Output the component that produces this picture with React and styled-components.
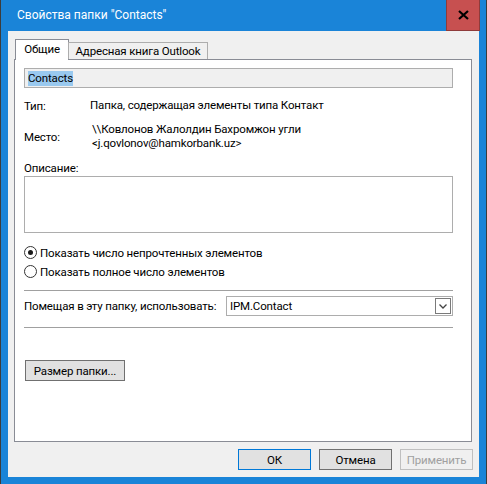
import React from "react";
import styled, { createGlobalStyle } from "styled-components";

const FONT = `Roboto, "Noto Sans", "Liberation Sans", sans-serif`;

const GlobalStyle = createGlobalStyle`
  html, body { margin: 0; padding: 0; background: #1a84d8; }
  * { box-sizing: border-box; }
  body {
    font-family: ${FONT};
    font-size: 11.5px;
    letter-spacing: -0.15px;
    color: #000;
  }
`;

const Window = styled.div`
  width: 487px;
  height: 484px;
  background: #1a84d8;
  border-left: 1px solid #3c3c3c;
  border-right: 1px solid #3c3c3c;
  display: flex;
  flex-direction: column;
  padding: 0 7px 7px 7px;
`;

const TitleBar = styled.div`
  height: 31px;
  display: flex;
  align-items: center;
  justify-content: space-between;
  margin-right: -8px;
`;

const Title = styled.span`
  color: #fff;
  font-size: 12px;
  letter-spacing: 0;
  padding-left: 9px;
  padding-bottom: 1px;
`;

const CloseButton = styled.div`
  width: 34px;
  height: 31px;
  margin-right: 7px;
  background: #c75050;
  border: 1px solid #8e3b3b;
  border-top: none;
  display: flex;
  align-items: center;
  justify-content: center;
`;

const Client = styled.div`
  flex: 1;
  background: #f0f0f0;
  padding: 8px 5px 0 6px;
  display: flex;
  flex-direction: column;
`;

const TabStrip = styled.div`
  display: flex;
  align-items: flex-end;
  height: 20px;
  padding-left: 1px;
  position: relative;
  z-index: 1;
`;

const Tab = styled.div`
  width: ${(p) => p.$w}px;
  height: ${(p) => (p.$active ? "21px" : "17px")};
  margin-bottom: ${(p) => (p.$active ? "-1px" : "0")};
  padding-bottom: ${(p) => (p.$active ? "2px" : "0")};
  background: ${(p) => (p.$active ? "#fff" : "#f0f0f0")};
  border: 1px solid ${(p) => (p.$active ? "#898c95" : "#adadad")};
  border-bottom: none;
  margin-left: ${(p) => (p.$active ? "0" : "-1px")};
  display: flex;
  align-items: center;
  justify-content: center;
  white-space: nowrap;
`;

const Panel = styled.div`
  width: 458px;
  height: 383px;
  background: #fff;
  border: 1px solid #898c95;
  padding: 8px 18px 0 9px;
  display: flex;
  flex-direction: column;
`;

const NameField = styled.div`
  height: 20px;
  background: #f0f0f0;
  border: 1px solid #adadad;
  display: flex;
  align-items: center;
  padding-left: 3px;
`;

const Selection = styled.span`
  background: #99c9ef;
  line-height: 15px;
`;

const InfoRow = styled.div`
  display: flex;
  align-items: center;
  margin-top: ${(p) => p.$mt || 0}px;
`;

const InfoLabel = styled.div`
  width: 66px;
  line-height: 16px;
`;

const InfoValue = styled.div`
  line-height: 13.5px;
  padding-left: ${(p) => p.$indent || 0}px;
`;

const FieldLabel = styled.div`
  line-height: 16px;
  margin-top: 10px;
`;

const TextBox = styled.div`
  height: 57px;
  border: 1px solid #adadad;
  background: #fff;
`;

const RadioGroup = styled.div`
  margin-top: 10px;
  display: flex;
  flex-direction: column;
`;

const RadioRow = styled.label`
  height: 19px;
  display: flex;
  align-items: center;
  gap: 3px;
`;

const RadioCircle = styled.span`
  width: 13px;
  height: 13px;
  border-radius: 50%;
  border: 1px solid #333;
  background: #fff;
  display: flex;
  align-items: center;
  justify-content: center;
  &::after {
    content: "";
    width: 5px;
    height: 5px;
    border-radius: 50%;
    background: ${(p) => (p.$checked ? "#1a1a1a" : "transparent")};
  }
`;

const Separator = styled.div`
  height: 1px;
  background: #a0a0a0;
  margin-top: ${(p) => p.$mt}px;
`;

const SelectRow = styled.div`
  display: flex;
  align-items: center;
  margin-top: 5px;
`;

const SelectLabel = styled.div`
  width: 202px;
  white-space: nowrap;
`;

const SelectBox = styled.div`
  flex: 1;
  height: 20px;
  border: 1px solid #adadad;
  background: #fff;
  display: flex;
  align-items: center;
  justify-content: space-between;
  padding: 0 1px 0 3px;
`;

const SelectArrow = styled.div`
  width: 16px;
  height: 16px;
  border: 1px solid #7a7a7a;
  background: #fff;
  display: flex;
  align-items: center;
  justify-content: center;
`;

const Button = styled.div`
  width: ${(p) => p.$w || 73}px;
  height: 21px;
  display: flex;
  align-items: center;
  justify-content: center;
  background: ${(p) => (p.$disabled ? "#f0f0f0" : "#e1e1e1")};
  color: ${(p) => (p.$disabled ? "#a0a0a0" : "#000")};
  border: 1px solid
    ${(p) => (p.$default ? "#0078d7" : p.$disabled ? "#bfbfbf" : "#707070")};
  white-space: nowrap;
`;

const SizeButton = styled(Button)`
  margin-top: 32px;
  margin-left: 1px;
  border-color: #707070;
`;

const Footer = styled.div`
  display: flex;
  justify-content: flex-end;
  gap: 8px;
  margin-top: 7px;
  padding-right: 1px;
`;

export default function App() {
  return (
    <>
      <GlobalStyle />
      <Window>
        <TitleBar>
          <Title>Свойства папки "Contacts"</Title>
          <CloseButton>
            <svg width="11" height="10" viewBox="0 0 11 10">
              <path d="M1 1 L10 9 M10 1 L1 9" stroke="#000" strokeWidth="2.2" />
            </svg>
          </CloseButton>
        </TitleBar>
        <Client>
          <TabStrip>
            <Tab $active $w={54}>Общие</Tab>
            <Tab $w={140}>Адресная книга Outlook</Tab>
          </TabStrip>
          <Panel>
            <NameField>
              <Selection>Contacts</Selection>
            </NameField>
            <InfoRow $mt={10}>
              <InfoLabel>Тип:</InfoLabel>
              <InfoValue>Папка, содержащая элементы типа Контакт</InfoValue>
            </InfoRow>
            <InfoRow $mt={9}>
              <InfoLabel>Место:</InfoLabel>
              <InfoValue $indent={2}>
                \\Ковлонов Жалолдин Бахромжон угли
                <br />
                &lt;j.qovlonov@hamkorbank.uz&gt;
              </InfoValue>
            </InfoRow>
            <FieldLabel>Описание:</FieldLabel>
            <TextBox />
            <RadioGroup>
              <RadioRow>
                <RadioCircle $checked />
                Показать число непрочтенных элементов
              </RadioRow>
              <RadioRow>
                <RadioCircle />
                Показать полное число элементов
              </RadioRow>
            </RadioGroup>
            <Separator $mt={9} />
            <SelectRow>
              <SelectLabel>Помещая в эту папку, использовать:</SelectLabel>
              <SelectBox>
                IPM.Contact
                <SelectArrow>
                  <svg width="8" height="5" viewBox="0 0 8 5">
                    <path d="M0.5 0.5 L4 4 L7.5 0.5" fill="none" stroke="#444" strokeWidth="1.3" />
                  </svg>
                </SelectArrow>
              </SelectBox>
            </SelectRow>
            <Separator $mt={11} />
            <SizeButton $w={100}>Размер папки...</SizeButton>
          </Panel>
          <Footer>
            <Button $default>ОК</Button>
            <Button>Отмена</Button>
            <Button $disabled>Применить</Button>
          </Footer>
        </Client>
      </Window>
    </>
  );
}
